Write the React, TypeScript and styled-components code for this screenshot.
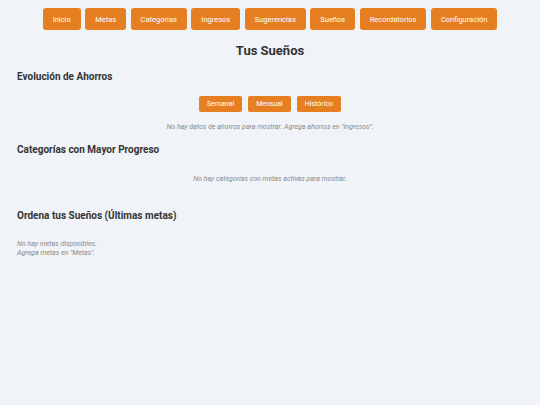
import React, { useState } from 'react'
import styled, { createGlobalStyle } from 'styled-components'

const GlobalStyle = createGlobalStyle`
  body {
    margin: 0;
    background: #f0f3f7;
    font-family: Roboto, "Liberation Sans", sans-serif;
    color: #333;
  }
`

const Page = styled.div`
  padding: 8px 17px;
`

const Nav = styled.nav`
  display: flex;
  justify-content: center;
  gap: 4.5px;
`

const NavButton = styled.button`
  height: 22px;
  padding: 0 10px;
  border: none;
  border-radius: 3px;
  background: #e67e22;
  color: #fff;
  font-family: inherit;
  font-size: 7.5px;
  cursor: pointer;
`

const Title = styled.h1`
  margin: 13px 0 0;
  text-align: center;
  font-size: 13px;
  line-height: 16px;
  font-weight: 700;
`

const SectionTitle = styled.h2<{ $top: number }>`
  margin: ${({ $top }) => $top}px 0 0;
  font-size: 10px;
  line-height: 12px;
  font-weight: 700;
`

const ToggleRow = styled.div`
  display: flex;
  justify-content: center;
  gap: 6px;
  margin-top: 13px;
`

const ToggleButton = styled.button`
  height: 16px;
  padding: 0 8px;
  border: none;
  border-radius: 2px;
  background: #e67e22;
  color: #fff;
  font-family: inherit;
  font-size: 7px;
  cursor: pointer;
`

const EmptyText = styled.p<{ $top: number; $align?: 'left' | 'center' }>`
  margin: ${({ $top }) => $top}px 0 0;
  text-align: ${({ $align }) => $align ?? 'center'};
  font-style: italic;
  font-size: 7px;
  line-height: 9px;
  color: #8a8a8a;
`

const tabs = ['Inicio', 'Metas', 'Categorías', 'Ingresos', 'Sugerencias', 'Sueños', 'Recordatorios', 'Configuración']
const ranges = ['Semanal', 'Mensual', 'Histórico']

export default function App() {
  const [range, setRange] = useState('Semanal')

  return (
    <Page>
      <GlobalStyle />
      <Nav>
        {tabs.map(t => (
          <NavButton key={t}>{t}</NavButton>
        ))}
      </Nav>
      <Title>Tus Sueños</Title>

      <SectionTitle $top={12}>Evolución de Ahorros</SectionTitle>
      <ToggleRow>
        {ranges.map(r => (
          <ToggleButton key={r} onClick={() => setRange(r)} aria-pressed={range === r}>
            {r}
          </ToggleButton>
        ))}
      </ToggleRow>
      <EmptyText $top={11}>No hay datos de ahorros para mostrar. Agrega ahorros en "Ingresos".</EmptyText>

      <SectionTitle $top={12}>Categorías con Mayor Progreso</SectionTitle>
      <EmptyText $top={19}>No hay categorías con metas activas para mostrar.</EmptyText>

      <SectionTitle $top={26}>Ordena tus Sueños (Últimas metas)</SectionTitle>
      <EmptyText $top={18} $align="left">
        No hay metas disponibles.
        <br />
        Agrega metas en "Metas".
      </EmptyText>
    </Page>
  )
}
